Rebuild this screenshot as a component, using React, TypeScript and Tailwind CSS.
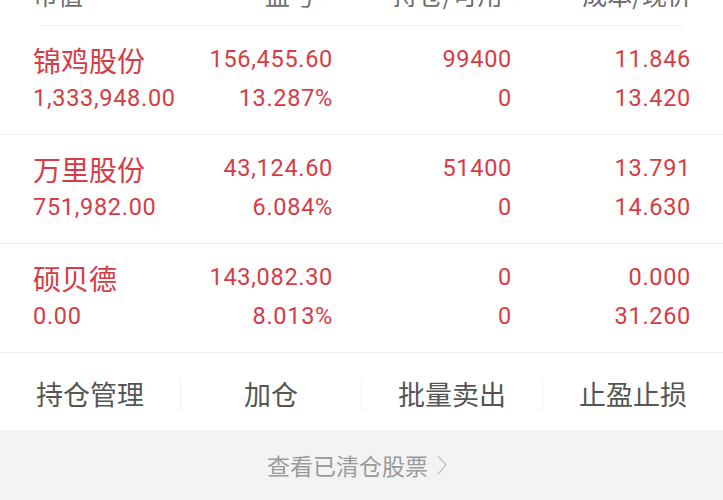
import React from "react";

const RED = "text-[#d63c46]";

type Row = { name: string; mv: string; pl: string; plp: string; hold: string; avail: string; cost: string; price: string };

const rows: Row[] = [
  { name: "锦鸡股份", mv: "1,333,948.00", pl: "156,455.60", plp: "13.287%", hold: "99400", avail: "0", cost: "11.846", price: "13.420" },
  { name: "万里股份", mv: "751,982.00", pl: "43,124.60", plp: "6.084%", hold: "51400", avail: "0", cost: "13.791", price: "14.630" },
  { name: "硕贝德", mv: "0.00", pl: "143,082.30", plp: "8.013%", hold: "0", avail: "0", cost: "0.000", price: "31.260" },
];

const NUM = "font-['Roboto','DejaVu_Sans',sans-serif] text-[23.5px] tracking-[0.7px]";
const CJK = "font-['Noto_Sans_CJK_SC',sans-serif]";

export default function App() {
  return (
    <div className={`w-[723px] h-[500px] bg-white overflow-hidden ${CJK}`}>
      {/* header (cut off at top) */}
      <div className="h-[25px] overflow-hidden">
        <div className="flex -mt-[20px] h-[30px] items-center pl-[33px] pr-[33px] text-[25px] text-[#6e6e6e] whitespace-nowrap">
          <div className="w-[150px] flex items-center">
            市值<span className="ml-[6px] text-[12px] text-[#cfcfcf]">▼</span>
          </div>
          <div className="w-[150px] flex items-center justify-end -mr-[6px]">
            盈亏<span className="ml-[6px] text-[12px] text-[#cfcfcf]">▼</span>
          </div>
          <div className="flex-1 flex items-center justify-end -mr-[4px]">
            持仓/可用<span className="ml-[6px] text-[12px] text-[#cfcfcf]">▼</span>
          </div>
          <div className="flex-1 flex items-center justify-end -mr-[20px]">
            成本/现价<span className="ml-[6px] text-[12px] text-[#cfcfcf]">▼</span>
          </div>
        </div>
      </div>
      <div className="mx-[40px] h-px bg-[#f1f1f1]" />

      {rows.map((r) => (
        <div key={r.name} className="border-b border-[#efefef] h-[109px] pt-[14px] pl-[33px] pr-[32px]">
          <div className={`flex h-[39px] items-center ${RED} whitespace-nowrap`}>
            <div className={`w-[150px] text-[28px] ${CJK}`}>{r.name}</div>
            <div className={`w-[150px] text-right ${NUM}`}>{r.pl}</div>
            <div className={`flex-1 text-right ${NUM}`}>{r.hold}</div>
            <div className={`flex-1 text-right ${NUM}`}>{r.cost}</div>
          </div>
          <div className={`flex h-[39px] items-center ${RED} whitespace-nowrap`}>
            <div className={`w-[150px] ${NUM}`}>{r.mv}</div>
            <div className={`w-[150px] text-right ${NUM}`}>{r.plp}</div>
            <div className={`flex-1 text-right ${NUM}`}>{r.avail}</div>
            <div className={`flex-1 text-right ${NUM}`}>{r.price}</div>
          </div>
        </div>
      ))}

      {/* action buttons */}
      <div className="flex h-[77px] items-center pt-[6px] text-[27px] text-[#555555]">
        {["持仓管理", "加仓", "批量卖出", "止盈止损"].map((t, i) => (
          <React.Fragment key={t}>
            {i > 0 && <div className="w-px h-[32px] bg-[#f0f0f0]" />}
            <div className="flex-1 text-center">{t}</div>
          </React.Fragment>
        ))}
      </div>

      {/* cleared stocks */}
      <div className="h-[70px] bg-[#f4f3f4] flex items-center justify-center pr-[8px] text-[23px] text-[#9a9a9a]">
        <span>查看已清仓股票</span>
        <svg className="ml-[8px]" width="12" height="22" viewBox="0 0 12 22" fill="none">
          <path d="M2 2 L10 11 L2 20" stroke="#c4c4c4" strokeWidth="1.5" />
        </svg>
      </div>
    </div>
  );
}
